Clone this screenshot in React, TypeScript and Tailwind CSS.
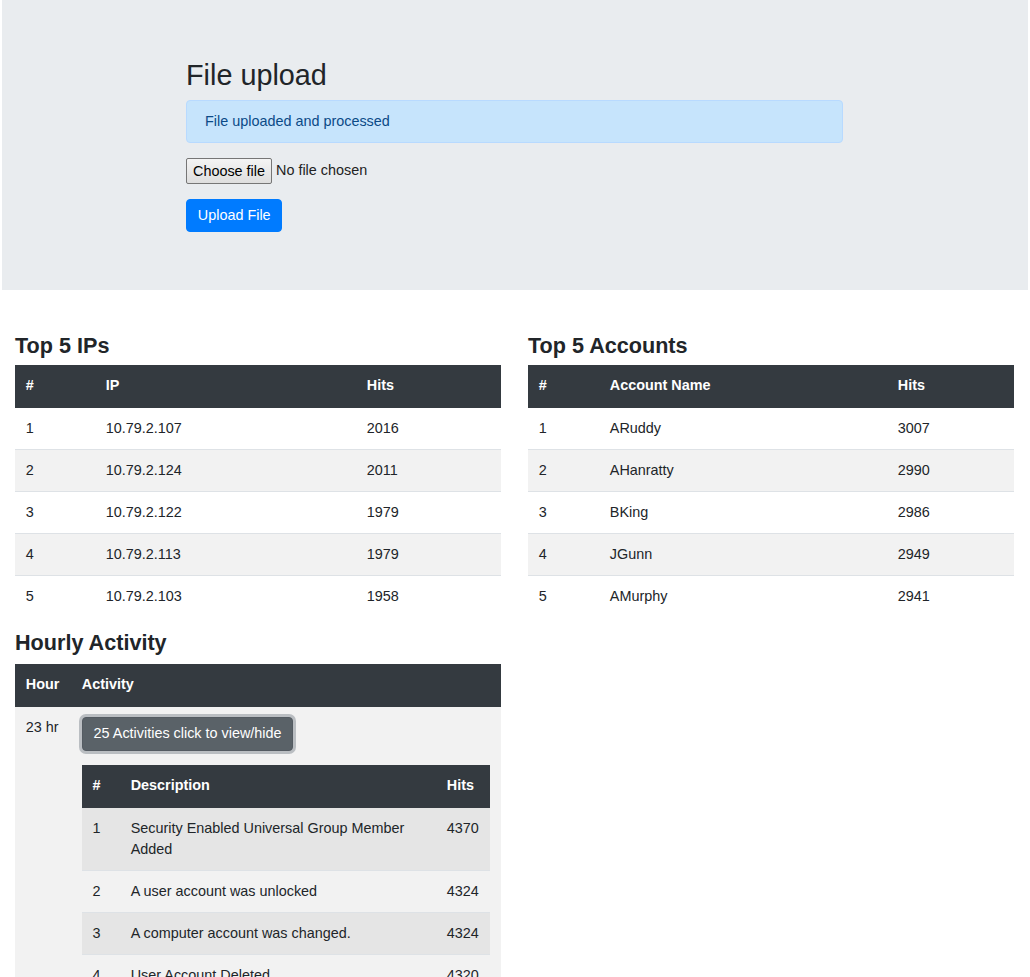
const ips = [
  ['1', '10.79.2.107', '2016'],
  ['2', '10.79.2.124', '2011'],
  ['3', '10.79.2.122', '1979'],
  ['4', '10.79.2.113', '1979'],
  ['5', '10.79.2.103', '1958'],
];

const accounts = [
  ['1', 'ARuddy', '3007'],
  ['2', 'AHanratty', '2990'],
  ['3', 'BKing', '2986'],
  ['4', 'JGunn', '2949'],
  ['5', 'AMurphy', '2941'],
];

const activities = [
  ['1', 'Security Enabled Universal Group Member Added', '4370'],
  ['2', 'A user account was unlocked', '4324'],
  ['3', 'A computer account was changed.', '4324'],
  ['4', 'User Account Deleted', '4320'],
];

const th = 'bg-[#343a40] text-white font-bold text-left align-bottom px-[10.8px] py-[10px] leading-[21px] border-b-2 border-[#343a40]';
const td = 'px-[10.8px] py-[10px] leading-[21px] align-top';

function DataTable({
  cols,
  widths,
  rows,
  stripeEven,
}: {
  cols: string[];
  widths: string[];
  rows: string[][];
  stripeEven?: boolean;
}) {
  return (
    <table className="w-full table-fixed">
      <colgroup>
        {widths.map((w, i) => (
          <col key={i} className={w} />
        ))}
      </colgroup>
      <thead>
        <tr>
          {cols.map((c) => (
            <th key={c} className={th}>
              {c}
            </th>
          ))}
        </tr>
      </thead>
      <tbody>
        {rows.map((r, i) => {
          const striped = stripeEven ? i % 2 === 1 : i % 2 === 0;
          return (
            <tr key={i} className={`border-t border-[#dee2e6] first:border-t-0 ${striped ? 'bg-black/5' : ''}`}>
              {r.map((c, j) => (
                <td key={j} className={td}>
                  {c}
                </td>
              ))}
            </tr>
          );
        })}
      </tbody>
    </table>
  );
}

export default function App() {
  return (
    <div className="min-h-screen bg-white font-['Liberation_Sans',Arial,sans-serif] text-[14.4px] leading-[21.6px] text-[#212529]">
      <section className="mx-[2px] h-[290px] bg-[#e9ecef] pt-[58px]">
        <div className="ml-[184px] w-[657px]">
          <h1 className="mb-[7px] text-[28.8px] leading-[34.56px] font-normal">File upload</h1>
          <div className="mb-[15px] rounded-[4px] border border-[#b8daff] bg-[#c6e4fc] px-[18px] py-[10px] text-[#0b4a87]">
            File uploaded and processed
          </div>
          <div className="flex h-[26px] items-center">
            <button className="h-[26px] rounded-[2px] border border-[#767676] bg-gradient-to-b from-[#f4f4f4] to-[#dedede] px-[6px] leading-[20px] text-black">
              Choose file
            </button>
            <span className="ml-[4px] text-[#222]">No file chosen</span>
          </div>
          <button className="mt-[15px] h-[33px] rounded-[4px] border border-[#007bff] bg-[#007bff] px-[10.8px] text-white">
            Upload File
          </button>
        </div>
      </section>

      <main className="mt-[43px] grid grid-cols-[486px_486px] items-start gap-x-[27px] pl-[15px]">
        <div>
          <h4 className="mb-[6px] text-[21.6px] leading-[26px] font-bold">Top 5 IPs</h4>
          <DataTable
            cols={['#', 'IP', 'Hits']}
            widths={['w-[80px]', 'w-[261px]', 'w-[145px]']}
            rows={ips}
            stripeEven
          />

          <h4 className="mt-[13px] mb-[8px] text-[21.6px] leading-[26px] font-bold">Hourly Activity</h4>
          <table className="w-full table-fixed">
            <colgroup>
              <col className="w-[56px]" />
              <col />
            </colgroup>
            <thead>
              <tr>
                <th className={th}>Hour</th>
                <th className={th}>Activity</th>
              </tr>
            </thead>
            <tbody>
              <tr className="bg-black/5">
                <td className={td}>23 hr</td>
                <td className={td}>
                  <button className="rounded-[4px] border border-[#545b62] bg-[#5a6268] px-[10.8px] py-[5.2px] leading-[21.6px] text-white ring-[3px] ring-[rgba(130,138,145,0.5)]">
                    25 Activities click to view/hide
                  </button>
                  <div className="mt-[14px]">
                    <DataTable
                      cols={['#', 'Description', 'Hits']}
                      widths={['w-[38px]', 'w-[315px]', 'w-[54px]']}
                      rows={activities}
                    />
                  </div>
                </td>
              </tr>
            </tbody>
          </table>
        </div>

        <div>
          <h4 className="mb-[6px] text-[21.6px] leading-[26px] font-bold">Top 5 Accounts</h4>
          <DataTable
            cols={['#', 'Account Name', 'Hits']}
            widths={['w-[71px]', 'w-[288px]', 'w-[127px]']}
            rows={accounts}
            stripeEven
          />
        </div>
      </main>
    </div>
  );
}
